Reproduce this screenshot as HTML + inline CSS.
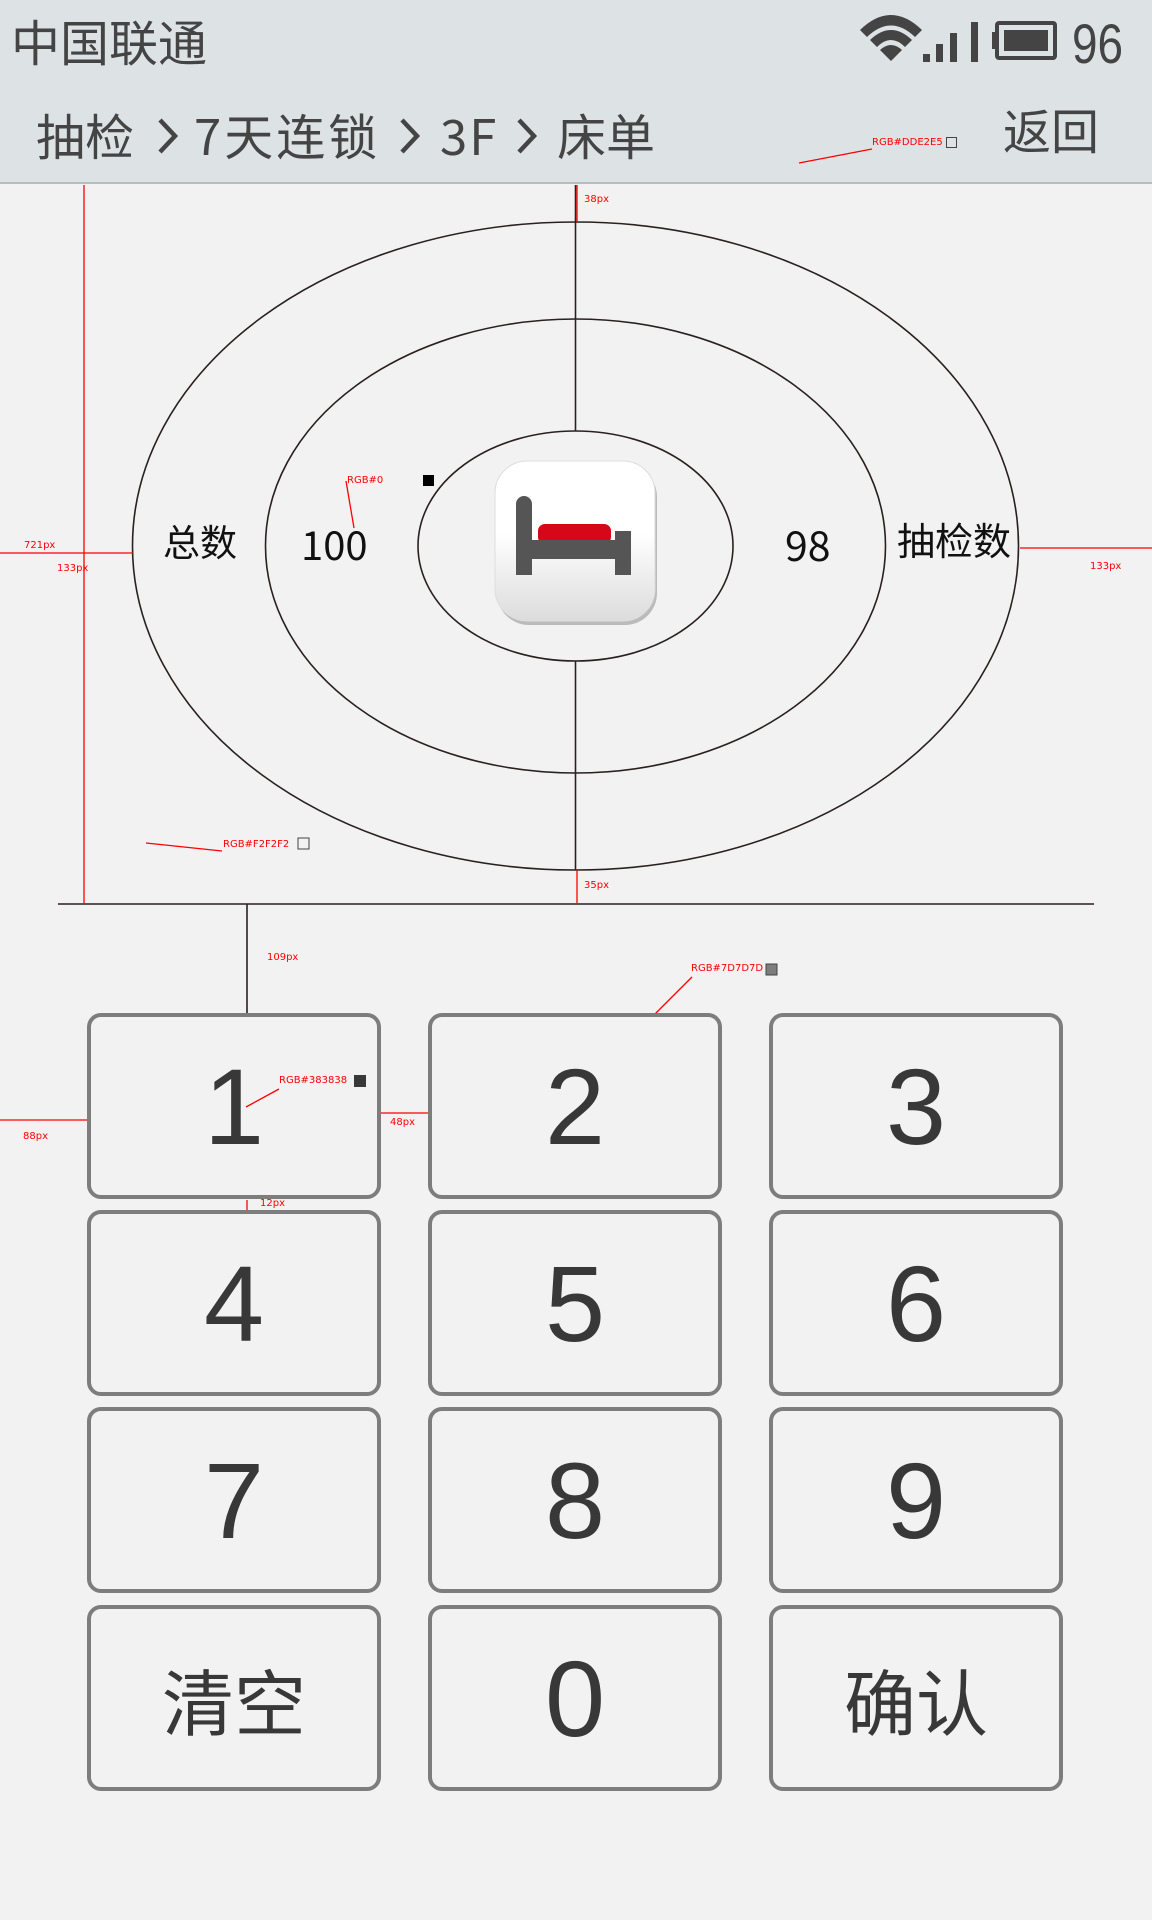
<!DOCTYPE html>
<html><head><meta charset="utf-8"><style>
*{margin:0;padding:0;box-sizing:border-box}
body{width:1152px;height:1920px;background:#F2F2F2;position:relative;overflow:hidden;font-family:"Liberation Sans","Noto Sans CJK SC",sans-serif;color:#383838}
.hdr{position:absolute;left:0;top:0;width:1152px;height:184px;background:#DDE2E5;border-bottom:2px solid #b8bcbe}
.t{position:absolute;white-space:nowrap;line-height:1}
.bc{position:absolute;white-space:nowrap;line-height:1;top:110px;font-size:49px;color:#444;font-family:"Noto Sans CJK SC",sans-serif}
.btn{position:absolute;width:294px;height:186px;border:4px solid #7D7D7D;border-radius:14px;display:flex;align-items:center;justify-content:center;font-size:108px;color:#383838}
.btn.cn{font-size:72px;font-family:"Noto Sans CJK SC",sans-serif}
.r{position:absolute;color:#f00;font-size:10px;font-family:"DejaVu Sans",sans-serif;white-space:nowrap;line-height:1}
</style></head><body>
<div class="hdr"></div>
<div class="t" style="left:11px;top:16px;font-size:49px;color:#444;font-family:'Noto Sans CJK SC',sans-serif">中国联通</div>
<svg style="position:absolute;left:0;top:0" width="1152" height="184">
<g fill="#444">
<path d="M860 30 Q891 0 922 30 L915 37 Q891 14 867 37Z"/>
<path d="M870 40 Q891 20 912 40 L905 47 Q891 33 877 47Z"/>
<path d="M880 50 Q891 40 902 50 L891 61Z"/>
<rect x="923" y="54" width="7" height="8"/><rect x="936" y="44" width="7" height="18"/><rect x="950" y="33" width="7" height="29"/><rect x="971" y="22" width="7" height="40"/>
<rect x="992" y="32" width="5" height="17"/>
<rect x="997" y="23" width="58" height="35" fill="none" stroke="#444" stroke-width="4" rx="2"/>
<rect x="1004" y="30" width="44" height="21"/>
</g>
<g fill="none" stroke="#444" stroke-width="4.5">
<polyline points="160,120 175,136 160,152"/>
<polyline points="402,120 417,136 402,152"/>
<polyline points="519,120 534,136 519,152"/>
</g>
</svg>
<div class="t" style="left:1072px;top:16px;font-size:56px;color:#444;transform:scaleX(0.82);transform-origin:left">96</div>
<div class="bc" style="left:36px">抽检</div>
<div class="bc" style="left:194px;letter-spacing:3px">7天连锁</div>
<div class="bc" style="left:440px;letter-spacing:2px">3F</div>
<div class="bc" style="left:557px">床单</div>
<div class="t" style="left:1003px;top:104px;font-size:48px;color:#444;font-family:'Noto Sans CJK SC',sans-serif">返回</div>
<div class="r" style="left:872px;top:138px">RGB#DDE2E5</div>
<div style="position:absolute;left:946px;top:137px;width:11px;height:11px;border:1px solid #444;background:#DDE2E5"></div>

<svg style="position:absolute;left:0;top:0" width="1152" height="1920">
<g fill="none" stroke="#2a2020" stroke-width="1.6">
<ellipse cx="575.5" cy="546" rx="443" ry="324"/>
<ellipse cx="575.5" cy="546" rx="310" ry="227"/>
<ellipse cx="575.5" cy="546" rx="157.5" ry="115"/>
<line x1="575.5" y1="185" x2="575.5" y2="431"/>
<line x1="575.5" y1="661" x2="575.5" y2="870"/>
<line x1="58" y1="904" x2="1094" y2="904"/>
<line x1="247" y1="904" x2="247" y2="1014"/>
</g>
<g stroke="#f00" stroke-width="1.3" fill="none">
<line x1="84" y1="185" x2="84" y2="904"/>
<line x1="0" y1="553" x2="133" y2="553"/>
<line x1="1020" y1="548" x2="1152" y2="548"/>
<line x1="577" y1="185" x2="577" y2="222"/>
<line x1="577" y1="870" x2="577" y2="903"/>
<line x1="799" y1="163" x2="872" y2="149"/>
<line x1="146" y1="843" x2="222" y2="851"/>
<line x1="346" y1="481" x2="354" y2="528"/>
<line x1="654" y1="1015" x2="692" y2="977"/>
<line x1="246" y1="1107" x2="279" y2="1089"/>
<line x1="380" y1="1113" x2="428" y2="1113"/>
<line x1="0" y1="1120" x2="87" y2="1120"/>
<line x1="247" y1="1200" x2="247" y2="1210"/>
</g>
<rect x="423" y="475" width="11" height="11" fill="#000"/>
<rect x="298" y="838" width="11" height="11" fill="none" stroke="#444"/>
<rect x="766" y="964" width="11" height="11" fill="#7D7D7D" stroke="#444"/>
<rect x="354" y="1075" width="12" height="12" fill="#383838"/>
<defs><linearGradient id="g" x1="0" y1="0" x2="0" y2="1"><stop offset="0.45" stop-color="#fff"/><stop offset="1" stop-color="#dcdcdc"/></linearGradient></defs>
<rect x="496" y="463" width="160" height="160" rx="32" fill="#bbb" transform="translate(1,2)"/>
<rect x="495" y="461" width="160" height="160" rx="32" fill="url(#g)" stroke="#ddd"/>
<rect x="538" y="524" width="73" height="20" rx="7" fill="#D60718"/>
<path d="M516 568 V504 a8 8 0 0 1 16 0 V540 H615 V531 H631 V575 H615 V559 H532 V575 H516Z" fill="#555"/>
</svg>
<div class="r" style="left:584px;top:195px">38px</div>
<div class="r" style="left:584px;top:881px">35px</div>
<div class="r" style="left:24px;top:541px">721px</div>
<div class="r" style="left:57px;top:564px">133px</div>
<div class="r" style="left:1090px;top:562px">133px</div>
<div class="r" style="left:347px;top:476px">RGB#0</div>
<div class="r" style="left:223px;top:840px">RGB#F2F2F2</div>
<div class="r" style="left:267px;top:953px">109px</div>
<div class="r" style="left:691px;top:964px">RGB#7D7D7D</div>
<div class="r" style="left:279px;top:1076px">RGB#383838</div>
<div class="r" style="left:390px;top:1118px">48px</div>
<div class="r" style="left:23px;top:1132px">88px</div>
<div class="r" style="left:260px;top:1199px">12px</div>

<div class="t" style="left:163px;top:522px;font-size:37px;color:#111;font-family:'Noto Sans CJK SC',sans-serif">总数</div>
<div class="t" style="left:301px;top:523px;font-size:40px;color:#111;font-family:'Noto Sans CJK SC',sans-serif">100</div>
<div class="t" style="left:785px;top:523px;font-size:41px;color:#111;font-family:'Noto Sans CJK SC',sans-serif">98</div>
<div class="t" style="left:897px;top:520px;font-size:38px;color:#111;font-family:'Noto Sans CJK SC',sans-serif">抽检数</div>

<div class="btn" style="left:87px;top:1013px">1</div>
<div class="btn" style="left:428px;top:1013px">2</div>
<div class="btn" style="left:769px;top:1013px">3</div>
<div class="btn" style="left:87px;top:1210px">4</div>
<div class="btn" style="left:428px;top:1210px">5</div>
<div class="btn" style="left:769px;top:1210px">6</div>
<div class="btn" style="left:87px;top:1407px">7</div>
<div class="btn" style="left:428px;top:1407px">8</div>
<div class="btn" style="left:769px;top:1407px">9</div>
<div class="btn cn" style="left:87px;top:1605px">清空</div>
<div class="btn" style="left:428px;top:1605px">0</div>
<div class="btn cn" style="left:769px;top:1605px">确认</div>
</body></html>
